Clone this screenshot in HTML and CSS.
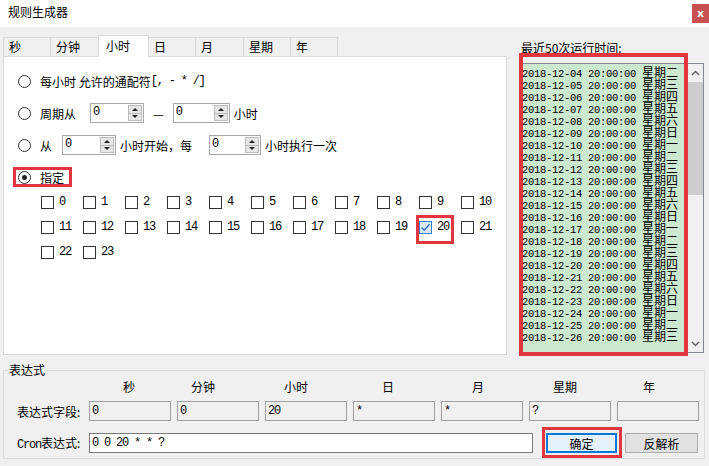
FILE: index.html
```html
<!DOCTYPE html>
<html lang="zh-CN">
<head>
<meta charset="utf-8">
<title>规则生成器</title>
<link rel="stylesheet" href="styles.css">
</head>
<body>
<div class="window">
  <div class="titlebar">
    <span class="title">规则生成器</span>
    <span class="close">x</span>
  </div>

  <div class="main">
    <div class="left">
      <div class="tabs">
        <div class="tab w48">秒</div>
        <div class="tab w49">分钟</div>
        <div class="tab sel">小时</div>
        <div class="tab w48">日</div>
        <div class="tab w49">月</div>
        <div class="tab w48">星期</div>
        <div class="tab w48">年</div>
      </div>
      <div class="panel">
        <div class="rows">
          <div class="row"><span class="radio"></span><span>每小时 允许的通配符</span><span class="m">[, - * /]</span></div>
          <div class="row">
            <span class="radio"></span><span>周期从</span>
            <span class="spin ml14"><span class="sv m">0</span><span class="sb"><i class="su"></i><i class="sd"></i></span></span>
            <span class="dash">—</span>
            <span class="spin w57"><span class="sv m">0</span><span class="sb"><i class="su"></i><i class="sd"></i></span></span>
            <span class="ml4">小时</span>
          </div>
          <div class="row">
            <span class="radio"></span><span>从</span>
            <span class="spin ml10"><span class="sv m">0</span><span class="sb"><i class="su"></i><i class="sd"></i></span></span>
            <span class="ml4">小时开始，每</span>
            <span class="spin ml17 w52"><span class="sv m">0</span><span class="sb"><i class="su"></i><i class="sd"></i></span></span>
            <span class="ml4">小时执行一次</span>
          </div>
          <div class="row"><span class="radio on"></span><span>指定</span></div>
        </div>
        <div class="checks">
          <label class="ck"><span class="box"></span>0</label>
          <label class="ck"><span class="box"></span>1</label>
          <label class="ck"><span class="box"></span>2</label>
          <label class="ck"><span class="box"></span>3</label>
          <label class="ck"><span class="box"></span>4</label>
          <label class="ck"><span class="box"></span>5</label>
          <label class="ck"><span class="box"></span>6</label>
          <label class="ck"><span class="box"></span>7</label>
          <label class="ck"><span class="box"></span>8</label>
          <label class="ck"><span class="box"></span>9</label>
          <label class="ck"><span class="box"></span>10</label>
          <label class="ck"><span class="box"></span>11</label>
          <label class="ck"><span class="box"></span>12</label>
          <label class="ck"><span class="box"></span>13</label>
          <label class="ck"><span class="box"></span>14</label>
          <label class="ck"><span class="box"></span>15</label>
          <label class="ck"><span class="box"></span>16</label>
          <label class="ck"><span class="box"></span>17</label>
          <label class="ck"><span class="box"></span>18</label>
          <label class="ck"><span class="box"></span>19</label>
          <label class="ck"><span class="box on"><svg width="11" height="11" viewBox="0 0 11 11"><path d="M1.5 5.5 L4.2 8.2 L9.5 2.2" fill="none" stroke="#2f6fb8" stroke-width="1.3"/></svg></span>20</label>
          <label class="ck"><span class="box"></span>21</label>
          <label class="ck"><span class="box"></span>22</label>
          <label class="ck"><span class="box"></span>23</label>
        </div>
      </div>
    </div>

    <div class="right">
      <div class="rlabel">最近50次运行时间:</div>
      <div class="listbox">
        <div class="items">
          <div class="item">2018-12-04 20:00:00 <b>星期二</b></div>
          <div class="item">2018-12-05 20:00:00 <b>星期三</b></div>
          <div class="item">2018-12-06 20:00:00 <b>星期四</b></div>
          <div class="item">2018-12-07 20:00:00 <b>星期五</b></div>
          <div class="item">2018-12-08 20:00:00 <b>星期六</b></div>
          <div class="item">2018-12-09 20:00:00 <b>星期日</b></div>
          <div class="item">2018-12-10 20:00:00 <b>星期一</b></div>
          <div class="item">2018-12-11 20:00:00 <b>星期二</b></div>
          <div class="item">2018-12-12 20:00:00 <b>星期三</b></div>
          <div class="item">2018-12-13 20:00:00 <b>星期四</b></div>
          <div class="item">2018-12-14 20:00:00 <b>星期五</b></div>
          <div class="item">2018-12-15 20:00:00 <b>星期六</b></div>
          <div class="item">2018-12-16 20:00:00 <b>星期日</b></div>
          <div class="item">2018-12-17 20:00:00 <b>星期一</b></div>
          <div class="item">2018-12-18 20:00:00 <b>星期二</b></div>
          <div class="item">2018-12-19 20:00:00 <b>星期三</b></div>
          <div class="item">2018-12-20 20:00:00 <b>星期四</b></div>
          <div class="item">2018-12-21 20:00:00 <b>星期五</b></div>
          <div class="item">2018-12-22 20:00:00 <b>星期六</b></div>
          <div class="item">2018-12-23 20:00:00 <b>星期日</b></div>
          <div class="item">2018-12-24 20:00:00 <b>星期一</b></div>
          <div class="item">2018-12-25 20:00:00 <b>星期二</b></div>
          <div class="item">2018-12-26 20:00:00 <b>星期三</b></div>
        </div>
        <div class="scrollbar">
          <div class="sbtn"><svg width="9" height="6" viewBox="0 0 9 6"><path d="M1 5 L4.5 1.5 L8 5" fill="none" stroke="#606060" stroke-width="1.4"/></svg></div>
          <div class="track"><div class="thumb"></div></div>
          <div class="sbtn"><svg width="9" height="6" viewBox="0 0 9 6"><path d="M1 1 L4.5 4.5 L8 1" fill="none" stroke="#606060" stroke-width="1.4"/></svg></div>
        </div>
      </div>
    </div>
  </div>

  <fieldset class="group">
    <legend>表达式</legend>
    <div class="hdr">
      <span>秒</span><span>分钟</span><span>小时</span><span>日</span><span>月</span><span>星期</span><span>年</span>
    </div>
    <div class="frow">
      <span class="flabel">表达式字段:</span>
      <span class="ro m">0</span><span class="ro m">0</span><span class="ro m">20</span><span class="ro m">*</span><span class="ro m">*</span><span class="ro m">?</span><span class="ro m"></span>
    </div>
    <div class="frow crow">
      <span class="flabel"><span class="m">Cron</span>表达式:</span>
      <span class="cron m">0 0 20 * * ?</span>
      <span class="btn primary">确定</span>
      <span class="btn">反解析</span>
    </div>
  </fieldset>

  <div class="mark m-spec"></div>
  <div class="mark m-20"></div>
  <div class="mark m-list"></div>
  <div class="mark m-ok"></div>
</div>
</body>
</html>
```

FILE: styles.css
```css
* { box-sizing: border-box; }
html, body { margin: 0; padding: 0; }
body {
  width: 709px;
  height: 466px;
  overflow: hidden;
  background: #f0f0f0;
  font-family: "Noto Sans CJK SC", "Microsoft YaHei", sans-serif;
  font-size: 12px;
  color: #000;
}
.window { position: relative; width: 709px; height: 466px; }

/* half-width glyphs drawn on a 6px grid, like the original bitmap font */
.m {
  font-family: "Liberation Mono", monospace;
  font-size: 12px;
  letter-spacing: -1.2px;
  white-space: pre;
}

/* title bar */
.titlebar {
  height: 27px;
  background: #fff;
  display: flex;
  justify-content: space-between;
  align-items: flex-start;
}
.title { padding: 4px 0 0 8px; line-height: 16px; }
.close {
  margin-top: 4px;
  width: 17px;
  height: 19px;
  background: #c75050;
  color: #fff;
  font: bold 11px "DejaVu Sans", sans-serif;
  display: flex;
  align-items: center;
  justify-content: center;
}

/* main area */
.main { display: flex; gap: 12px; padding: 8px 0 0 3px; }
.left { width: 504px; }

.tabs { display: flex; align-items: flex-end; height: 21px; }
.tab {
  height: 19px;
  border: 1px solid #d9d9d9;
  border-bottom: none;
  margin-right: -1px;
  background: #f0f0f0;
  padding-left: 5px;
  line-height: 18px;
}
.w48 { width: 48px; }
.w49 { width: 49px; }
.tab.sel {
  width: 51px;
  height: 22px;
  margin-bottom: -1px;
  background: #fff;
  padding-left: 7px;
  line-height: 19px;
  position: relative;
  z-index: 1;
}

.panel {
  height: 299px;
  background: #fff;
  border: 1px solid #d9d9d9;
  padding: 14px 0 0 14px;
}
.rows { display: flex; flex-direction: column; gap: 12px; }
.row { display: flex; align-items: center; height: 20px; white-space: pre; }
.radio {
  width: 13px;
  height: 13px;
  border: 1px solid #333;
  border-radius: 50%;
  background: #fff;
  margin-right: 9px;
  display: flex;
  align-items: center;
  justify-content: center;
}
.radio.on::after {
  content: "";
  width: 5px;
  height: 5px;
  border-radius: 50%;
  background: #222;
}
.ml4 { margin-left: 4px; }
.ml10 { margin-left: 10px; }
.ml14 { margin-left: 14px; }
.ml17 { margin-left: 17px; }
.dash { margin: 0 9px; }

.spin {
  display: flex;
  width: 54px;
  height: 20px;
  border: 1px solid #a8a8a8;
  background: #fff;
}
.spin.w57 { width: 57px; }
.spin.w52 { width: 52px; }
.sv { flex: 1; padding-left: 2px; line-height: 17px; }
.sb { width: 15px; display: flex; flex-direction: column; padding: 1px 1px 1px 0; }
.su, .sd {
  flex: 1;
  background: #e6e6e6;
  border: 1px solid #bcbcbc;
  display: flex;
  align-items: center;
  justify-content: center;
}
.sd { border-top: none; }
.su::after {
  content: "";
  border-left: 3px solid transparent;
  border-right: 3px solid transparent;
  border-bottom: 3px solid #222;
}
.sd::after {
  content: "";
  border-left: 3px solid transparent;
  border-right: 3px solid transparent;
  border-top: 3px solid #222;
}

.checks {
  display: grid;
  grid-template-columns: repeat(11, 42px);
  grid-auto-rows: 16px;
  row-gap: 9px;
  margin: 7px 0 0 23px;
}
.ck {
  display: flex;
  align-items: center;
  line-height: 16px;
  font-family: "Liberation Mono", monospace;
  letter-spacing: -1.2px;
}
.box {
  width: 13px;
  height: 13px;
  border: 1px solid #333;
  background: #fff;
  margin-right: 5px;
  display: flex;
  align-items: center;
  justify-content: center;
}
.box.on { border-color: #2f7fd0; background: #d8eaf9; }

/* right column */
.right { width: 185px; padding-top: 5px; }
.rlabel { line-height: 16px; padding-left: 2px; }
.listbox {
  margin-top: 7px;
  height: 290px;
  border: 1px solid #828790;
  background: #cce8cf;
  display: flex;
}
.items { flex: 1; padding: 2px 0 0 2px; overflow: hidden; }
.item {
  height: 12px;
  line-height: 12px;
  white-space: pre;
  font-family: "Liberation Mono", monospace;
  font-size: 10.5px;
  letter-spacing: -0.3px;
}
.item b {
  font-weight: normal;
  font-family: "Noto Sans CJK SC", sans-serif;
  font-size: 12px;
  line-height: 12px;
  letter-spacing: 0;
}
.scrollbar { width: 15px; background: #f0f0f0; display: flex; flex-direction: column; }
.sbtn { height: 17px; display: flex; align-items: center; justify-content: center; }
.track { flex: 1; padding-top: 1px; }
.thumb { width: 15px; height: 113px; background: #cdcdcd; }

/* expression group */
.group {
  margin: 7px 4px 0 3px;
  padding: 0 0 5px 0;
  border: 1px solid #dcdcdc;
  min-width: 0;
}
.group legend { margin-left: 4px; padding: 0 1px; line-height: 16px; }
.hdr {
  display: grid;
  grid-template-columns: 60px 88px 98px 86px 94px 80px 88px;
  padding-left: 95px;
  margin-top: 1px;
  line-height: 16px;
  text-align: center;
}
.frow { display: flex; align-items: center; padding-left: 13px; margin-top: 6px; gap: 6px; }
.crow { margin-top: 12px; gap: 0; }
.flabel { width: 66px; white-space: nowrap; }
.crow .flabel { width: 72px; }
.ro {
  width: 82px;
  height: 20px;
  border: 1px solid #a0a0a0;
  background: #f0f0f0;
  padding-left: 2px;
  line-height: 18px;
}
.cron {
  width: 444px;
  height: 20px;
  border: 1px solid #7a7a7a;
  background: #fff;
  padding-left: 2px;
  line-height: 18px;
}
.btn {
  width: 73px;
  height: 20px;
  margin-left: 8px;
  border: 1px solid #adadad;
  background: #e1e1e1;
  display: flex;
  align-items: center;
  justify-content: center;
}
.btn.primary {
  width: 71px;
  margin-left: 13px;
  border: 2px solid #0078d7;
  background: #e5f1fb;
}

/* red annotation marks */
.mark { position: absolute; border: 3px solid #e2363f; }
.m-spec { left: 13px; top: 167px; width: 59px; height: 20px; }
.m-20 { left: 416px; top: 215px; width: 38px; height: 29px; }
.m-list { left: 519px; top: 53px; width: 169px; height: 303px; border-width: 4px; }
.m-ok { left: 542px; top: 427px; width: 80px; height: 31px; }
```
